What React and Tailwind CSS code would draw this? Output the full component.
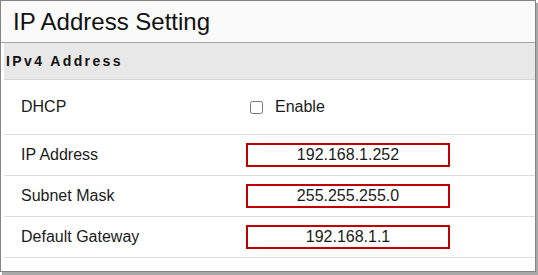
import React from 'react';

const rows = [
  { label: 'IP Address', value: '192.168.1.252' },
  { label: 'Subnet Mask', value: '255.255.255.0' },
  { label: 'Default Gateway', value: '192.168.1.1' },
];

function App() {
  return (
    <div className="w-[538px] h-[275px] bg-white font-['Liberation_Sans',Arial,sans-serif] text-[#1a1a1a]">
      <div className="w-[536px] h-[272px] border border-[#858585] shadow-[2px_3px_1px_#a8a8a8] bg-white">
        {/* page title */}
        <div className="h-[42px] bg-[#fafafa] border-b border-[#a6a6a6] flex items-center pl-[12px]">
          <h1 className="text-[24px] leading-none text-[#111]">IP Address Setting</h1>
        </div>

        <div className="ml-[3px]">
          {/* section header */}
          <div className="h-[37px] bg-[#e8e8e8] border-b border-[#d6d6d6] flex items-center pl-[2px]">
            <h2 className="text-[14px] font-bold tracking-[2.4px] text-[#111]">IPv4 Address</h2>
          </div>

          <div className="h-[55px] border-b border-[#dcdcdc] flex items-center">
            <div className="w-[242px] pl-[17px] text-[16px]">DHCP</div>
            <label className="flex items-center text-[16px]">
              <input type="checkbox" className="w-[13px] h-[13px] ml-[4px] mr-[12px]" />
              Enable
            </label>
          </div>

          {rows.map((row) => (
            <div key={row.label} className="h-[41px] border-b border-[#dcdcdc] flex items-center">
              <div className="w-[242px] pl-[17px] text-[16px]">{row.label}</div>
              <input
                type="text"
                readOnly
                value={row.value}
                className="w-[204px] h-[24px] border-2 border-[#c00000] text-center text-[16px] text-[#1a1a1a] outline-none"
              />
            </div>
          ))}
        </div>
      </div>
    </div>
  );
}

export default App;
